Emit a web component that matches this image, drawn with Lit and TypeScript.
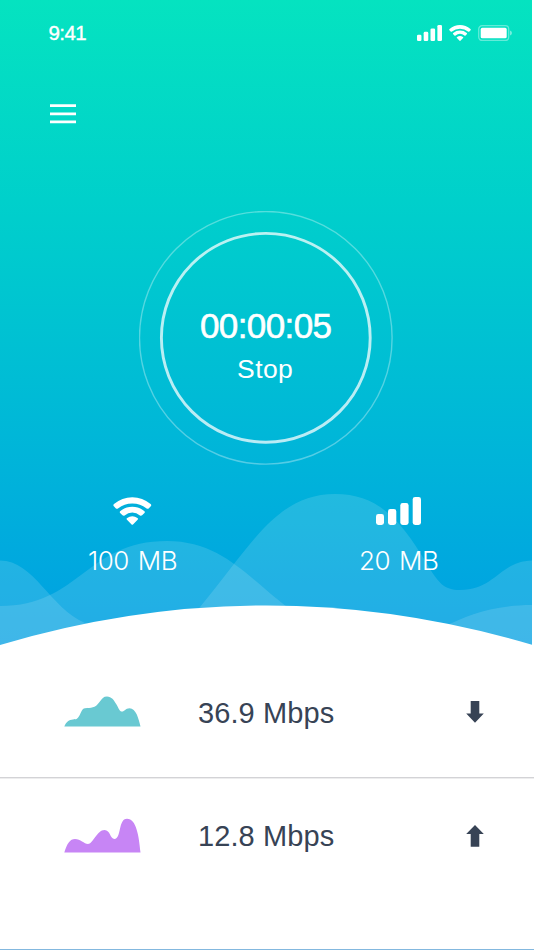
import { LitElement, html, css, svg } from "lit";
import { customElement } from "lit/decorators.js";

const bars = svg`
  <rect x="0" y="17" width="8" height="11" rx="2.4"/>
  <rect x="12" y="12" width="8.3" height="16" rx="2.4"/>
  <rect x="24.3" y="6" width="8.3" height="22" rx="2.4"/>
  <rect x="36.7" y="0" width="8.3" height="28" rx="2.4"/>`;

const wifi = svg`
  <path d="M1.1 9.6Q-.3 8.4 1 7.1Q9 .2 19.3 .2T37.6 7.1Q38.9 8.4 37.5 9.6L35.7 11.4Q34.5 12.3 33.3 11.3Q27.5 6.4 19.3 6.4T5.3 11.3Q4.1 12.3 2.9 11.4Z"/>
  <path d="M7.4 16.3Q6.1 15.2 7.4 14.1Q12.6 9.8 19.3 9.8T31.2 14.1Q32.5 15.2 31.2 16.3L29.1 18.3Q28 19.2 27 18.4Q23.5 15.5 19.3 15.5T11.6 18.4Q10.6 19.2 9.5 18.3Z"/>
  <path d="M14 22.8Q12.9 21.6 14.2 20.9Q16.5 19.2 19.3 19.2T24.4 20.9Q25.7 21.6 24.6 22.8L20 27.5Q19.3 28.1 18.6 27.5Z"/>`;

@customElement("app-root")
export class AppRoot extends LitElement {
  static styles = css`
    :host {
      display: block;
      height: 950px;
      overflow: hidden;
      background: #fff;
      color: #374355;
      font-family: "Liberation Sans", Arial, sans-serif;
    }
    svg { display: block; flex: none; }
    .screen {
      box-sizing: border-box;
      height: 950px;
      display: flex;
      flex-direction: column;
    }
    .hero {
      position: relative;
      width: 532.4px;
      height: 645px;
      flex: none;
      display: flex;
      flex-direction: column;
      color: #fff;
    }
    .backdrop { position: absolute; inset: 0; }
    .status, .nav, .dial, .stats { position: relative; }
    .status {
      display: flex;
      align-items: center;
      height: 66px;
      padding: 0 20.5px 0 48.5px;
      box-sizing: border-box;
    }
    .time {
      font-size: 20.5px;
      flex: 1;
      letter-spacing: -0.6px;
      -webkit-text-stroke: 0.35px #fff;
    }
    .icons { display: flex; align-items: center; gap: 7px; }
    .nav {
      box-sizing: border-box;
      height: 144.5px;
      padding: 38px 50px 0;
    }
    .dial {
      width: 254px;
      height: 254px;
      flex: none;
      margin: 0 auto;
      display: flex;
      align-items: center;
      justify-content: center;
    }
    .rings { position: absolute; inset: 0; }
    .readout {
      position: relative;
      display: flex;
      flex-direction: column;
      align-items: center;
      padding: 16px 1px 0 0;
    }
    .clock {
      font-size: 35px;
      line-height: 40px;
      letter-spacing: -0.6px;
      -webkit-text-stroke: 0.6px #fff;
    }
    .action {
      font-size: 26.5px;
      line-height: 32px;
      margin: 7px 1px 0 0;
      letter-spacing: 0.4px;
    }
    .stats { display: flex; margin-top: 32.5px; }
    .stat {
      flex: 1;
      display: flex;
      flex-direction: column;
      align-items: center;
      gap: 20px;
      margin-left: -1px;
      font: 300 26px/32px Inter, "Liberation Sans", sans-serif;
      letter-spacing: -0.45px;
      word-spacing: 2px;
    }
    .row {
      display: grid;
      grid-template-columns: 134px 1fr 18px;
      padding: 0 50px 0 64px;
      box-sizing: border-box;
    }
    .down { height: 133px; padding-top: 50px; border-bottom: 1px solid #d3d3d6; }
    .up {
      flex: 1;
      padding-top: 39px;
      border-top: 1px solid #ededee;
      border-bottom: 1px solid #83b8df;
    }
    .rate { font-size: 29px; line-height: 36px; letter-spacing: 0.1px; }
    .down .arrow { margin-top: 5.5px; }
    .up .arrow { margin-top: 6.5px; }
  `;

  render() {
    return html`
      <main class="screen">
        <section class="hero">
          <svg class="backdrop" width="532.4" height="645" viewBox="0 0 532.4 645" preserveAspectRatio="none">
            <defs>
              <linearGradient id="sky" x1="0" y1="0" x2="0" y2="1">
                <stop offset="0" stop-color="#05e3c0"/>
                <stop offset=".31" stop-color="#00d0cb"/>
                <stop offset=".73" stop-color="#00b3da"/>
                <stop offset="1" stop-color="#009fe3"/>
              </linearGradient>
            </defs>
            <rect width="533" height="645" fill="url(#sky)"/>
            <g fill="#fff" fill-opacity=".135">
              <path d="M0 606C80 606 86 541 167 541C255 541 270 636 380 641C445 641 455 605 533 605V645H0Z"/>
              <path d="M0 560.5C34 560.5 50 608 85 623C120 638 165 648 200 607C250 548 275 494 335 494C383 494 404 527 426 562C438 583 444 590 460 590C496 590 500 560.5 533 560.5V645H0Z"/>
            </g>
            <path d="M0 645Q266 566 533 645Z" fill="#fff"/>
          </svg>
          <div class="status">
            <span class="time">9:41</span>
            <div class="icons">
              <svg width="25" height="16" viewBox="0 0 45 28" fill="#fff" preserveAspectRatio="none">${bars}</svg>
              <svg width="22" height="16" viewBox="0 0 38.6 28" fill="#fff" preserveAspectRatio="none">${wifi}</svg>
              <svg width="34" height="16" viewBox="0 0 34 16">
                <rect x=".7" y=".7" width="30" height="14.8" rx="3.4" fill="none" stroke="#fff" stroke-opacity=".38" stroke-width="1.3"/>
                <rect x="2.7" y="2.8" width="26" height="10.5" rx="1.6" fill="#fff"/>
                <path d="M32 5.5Q34 6.3 34 8T32 10.6Z" fill="#fff" fill-opacity=".45"/>
              </svg>
            </div>
          </div>
          <div class="nav">
            <svg width="26" height="20" viewBox="0 0 26 20" fill="#fff">
              <path d="M0 .3H26V3.1H0ZM0 8.4H26V11.2H0ZM0 16.5H26V19.3H0Z"/>
            </svg>
          </div>
          <div class="dial">
            <svg class="rings" width="254" height="254" viewBox="0 0 254 254" fill="none" stroke="#fff">
              <circle cx="126.8" cy="126.8" r="126.3" stroke-width="1.4" stroke-opacity=".33"/>
              <circle cx="126.8" cy="126.8" r="104.4" stroke-width="2.9" stroke-opacity=".73"/>
            </svg>
            <div class="readout">
              <div class="clock">00:00:05</div>
              <div class="action">Stop</div>
            </div>
          </div>
          <div class="stats">
            <div class="stat">
              <svg width="38.6" height="28" viewBox="0 0 38.6 28" fill="#fff">${wifi}</svg>
              <span>100 MB</span>
            </div>
            <div class="stat">
              <svg width="45" height="28" viewBox="0 0 45 28" fill="#fff">${bars}</svg>
              <span>20 MB</span>
            </div>
          </div>
        </section>
        <section class="row down">
          <svg width="77" height="32" viewBox="0 0 77 32" fill="#69c9d2">
            <path d="M.3 31.4C2.5 26.5 5 24.5 9 24.4C12.5 24.3 13 24.4 15 21.3C17.3 17.5 17.8 13.5 21 13.2C27 12.7 31 13.5 35.5 7C38 3.3 39.5 1.4 43 1.4C47.5 1.4 50 5 52.5 9.5C54.5 13 55.5 16.6 58 16.6C60.5 16.6 61.5 13.2 65.5 13.2C72 13.2 74.5 23.4 76.5 31.4Z"/>
          </svg>
          <span class="rate">36.9 Mbps</span>
          <svg class="arrow" width="18" height="22" viewBox="0 0 18 22" fill="#374355"><path d="M4.7 0H13.3V12.6H17.8L9 21.7L.2 12.6H4.7Z"/></svg>
        </section>
        <section class="row up">
          <svg width="77" height="36" viewBox="0 0 77 36" fill="#c785f5">
            <path d="M.3 34.600C3 25.600 6 21 11 21C16.500 21 20 25.900 24 25.900C29 25.900 33 11.900 40.500 11.900C46.500 11.900 46 20.900 50.500 20.900C57.500 20.900 54 .8 63 .8C72.500 .8 75 18.600 76.500 34.600Z"/>
          </svg>
          <span class="rate">12.8 Mbps</span>
          <svg class="arrow" width="18" height="22" viewBox="0 0 18 22" fill="#374355"><path d="M4.7 21.7H13.3V9.1H17.8L9 0L.2 9.1H4.7Z"/></svg>
        </section>
      </main>
    `;
  }
}
